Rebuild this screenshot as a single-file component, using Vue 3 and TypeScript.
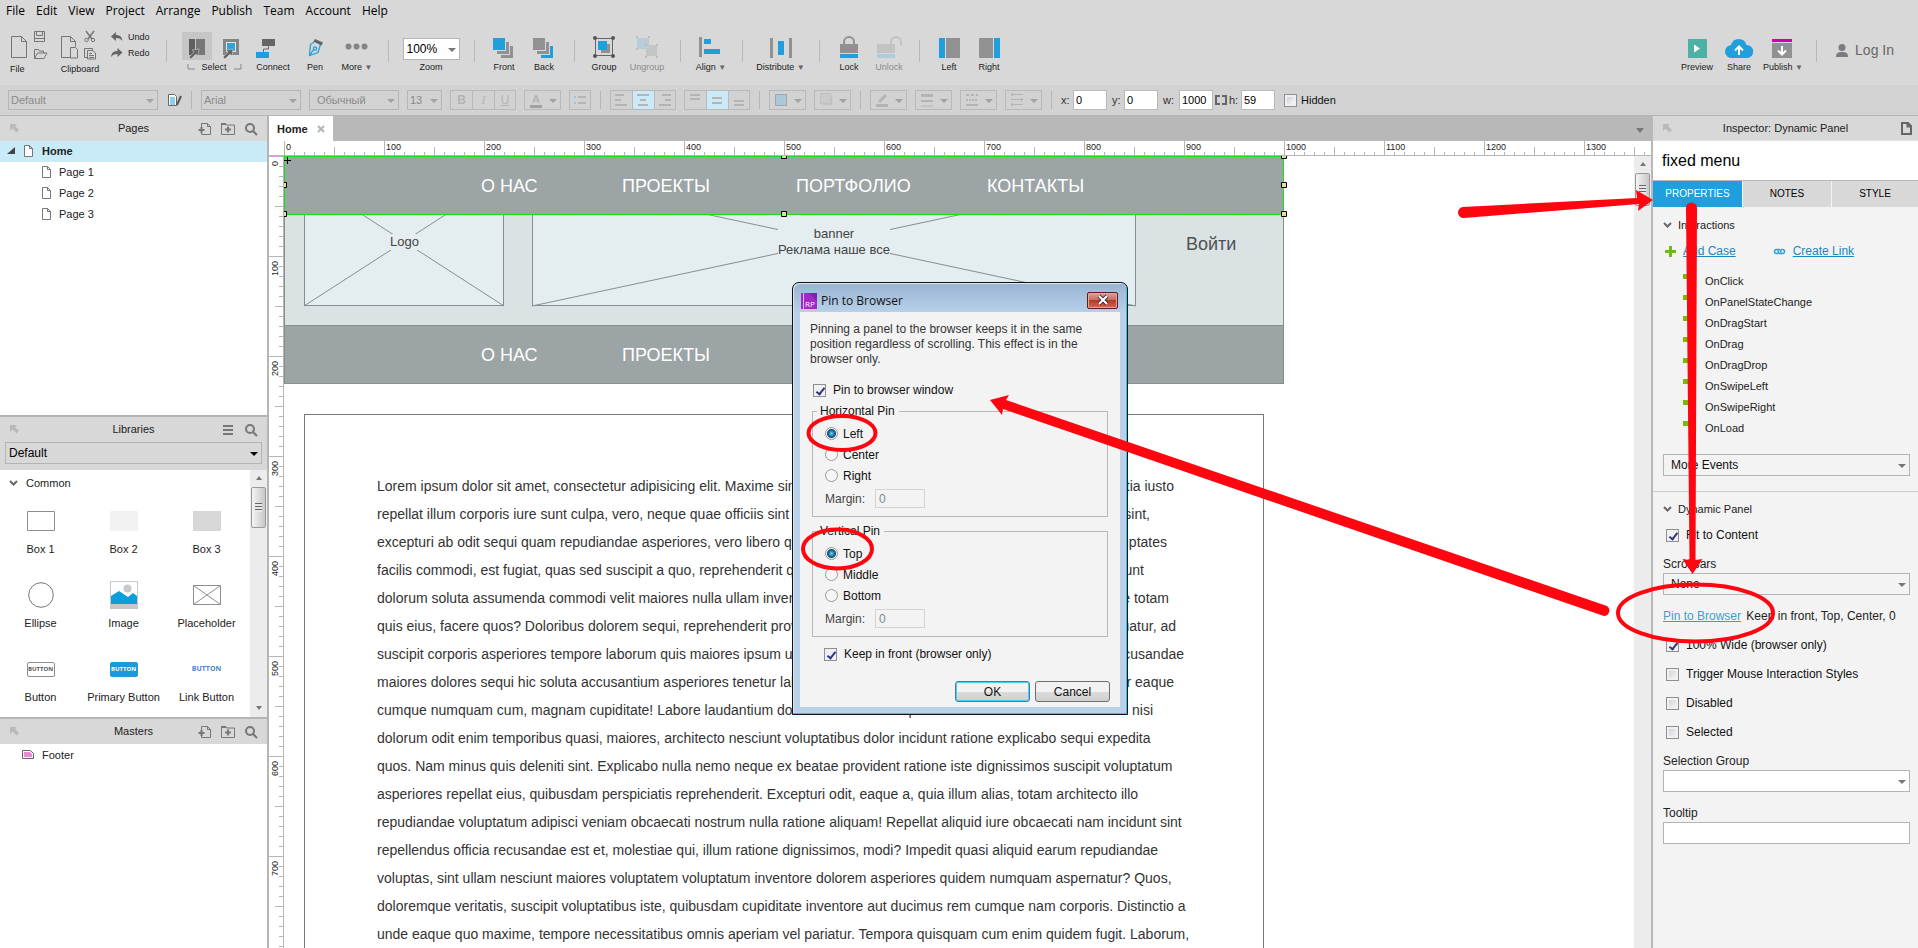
<script setup lang="ts">
import { ref } from 'vue'

interface CopyLine {
  lead: string
  tail?: string
  width?: number
}

const menus: string[] = ['File', 'Edit', 'View', 'Project', 'Arrange', 'Publish', 'Team', 'Account', 'Help']
const pages: string[] = ['Page 1', 'Page 2', 'Page 3']
const hMarks: number[] = Array.from({ length: 14 }, (_, i) => i * 100)
const vMarks: number[] = Array.from({ length: 8 }, (_, i) => i * 100)
const events: string[] = [
  'OnClick', 'OnPanelStateChange', 'OnDragStart', 'OnDrag', 'OnDragDrop', 'OnSwipeLeft', 'OnSwipeRight', 'OnLoad',
]
const navItems: string[] = ['О НАС', 'ПРОЕКТЫ', 'ПОРТФОЛИО', 'КОНТАКТЫ']

const copy: CopyLine[] = [
  { lead: 'Lorem ipsum dolor sit amet, consectetur adipisicing elit. Maxime sint quod', tail: 'mollitia iusto', width: 797 },
  { lead: 'repellat illum corporis iure sunt culpa, vero, neque quae officiis sint', tail: 'sint,', width: 773 },
  { lead: 'excepturi ab odit sequi quam repudiandae asperiores, vero libero quo', tail: 'voluptates', width: 790 },
  { lead: 'facilis commodi, est fugiat, quas sed suscipit a quo, reprehenderit quia', tail: 'incidunt', width: 767 },
  { lead: 'dolorum soluta assumenda commodi velit maiores nulla ullam invento', tail: 'quae totam', width: 792 },
  { lead: 'quis eius, facere quos? Doloribus dolorem sequi, reprehenderit prov', tail: 'consequatur, ad', width: 799 },
  { lead: 'suscipit corporis asperiores tempore laborum quis maiores ipsum unde', tail: 'recusandae', width: 807 },
  { lead: 'maiores dolores sequi hic soluta accusantium asperiores tenetur labore', tail: 'tenetur eaque', width: 797 },
  { lead: 'cumque numquam cum, magnam cupiditate! Labore laudantium dolor mollitia nam culpa', tail: 'nisi', width: 776 },
  { lead: 'dolorum odit enim temporibus quasi, maiores, architecto nesciunt voluptatibus dolor incidunt ratione explicabo sequi expedita' },
  { lead: 'quos. Nam minus quis deleniti sint. Explicabo nulla nemo neque ex beatae provident ratione iste dignissimos suscipit voluptatum' },
  { lead: 'asperiores repellat eius, quibusdam perspiciatis reprehenderit. Excepturi odit, eaque a, quia illum alias, totam architecto illo' },
  { lead: 'repudiandae voluptatum adipisci veniam obcaecati nostrum nulla ratione aliquam! Repellat aliquid iure obcaecati nam incidunt sint' },
  { lead: 'repellendus officia recusandae est et, molestiae qui, illum ratione dignissimos, modi? Impedit quasi aliquid earum repudiandae' },
  { lead: 'voluptas, sint ullam nesciunt maiores voluptatem voluptatum inventore dolorem asperiores quidem numquam aspernatur? Quos,' },
  { lead: 'doloremque veritatis, suscipit voluptatibus iste, quibusdam cupiditate inventore aut ducimus rem cumque nam corporis. Distinctio a' },
  { lead: 'unde eaque quo maxime, tempore necessitatibus omnis aperiam vel pariatur. Tempora quisquam cum enim quidem fugit. Laborum,' },
]

const pinned = ref(true)
const keepFront = ref(true)
const hPin = ref('Left')
const vPin = ref('Top')
const fit = ref(true)
const wide = ref(true)
const trigger = ref(false)
const disabled = ref(false)
const selected = ref(false)
const hidden = ref(false)
</script>

<template>
  <div class="app">
    <nav class="menubar">
      <button v-for="m in menus" :key="m">{{ m }}</button>
    </nav>

    <header class="toolbar">
      <div class="tool file-tool">
        <svg viewBox="8 33 44 28" width="44" height="28" fill="none" stroke="#757575">
          <path d="M11.5 36.5h10l5 5v16h-15zM21.5 36.5v5h5" />
          <path d="M34.5 31.5h10v10h-10zM36.5 31.5v4h6v-4M34.5 38.500h10" />
          <path d="M34.500 58.500v-9h4l1 1.500h4v2M34.500 58.500l3-5.500h9.500l-3 5.500z" />
        </svg>
        <button class="wide-label">File</button>
      </div>
      <div class="tool clip-tool">
        <svg viewBox="58 33 44 28" width="44" height="28" fill="none" stroke="#757575">
          <path d="M70 57.500h-8.500v-21h9l5 5v5M70.500 36.500v5h5" />
          <path d="M70.500 47.500h5l2 2v8.500h-7z" fill="#d8d8d8" />
          <path d="M86 31l6 8M94 31l-6 8" stroke-width="1.500" />
          <circle cx="86.500" cy="40" r="1.700" /><circle cx="93" cy="40" r="1.700" />
          <path d="M87 57.500h-2.500v-9h8v2M87.500 50.500h5l3 2.500v6h-8zM89 53.500h3M89 55.500h5M89 57.500h5" />
        </svg>
        <button class="wide-label">Clipboard</button>
      </div>
      <div class="history">
        <button><svg width="12" height="10" viewBox="0 0 12 10"><path d="M0 4.500L5 0v3c4 0 6 2 6.500 6C10 7 8 6 5 6v3z" fill="#666" /></svg>Undo</button>
        <button><svg width="12" height="10" viewBox="0 0 12 10"><path d="M11.500 4.500L6.500 0v3C2.500 3 .5 5 0 9c1.500-2 3.500-3 6.500-3v3z" fill="#666" /></svg>Redo</button>
      </div>
      <i class="sep"></i>
      <div class="tool select-tool">
        <svg viewBox="176 33 74 28" width="74" height="28">
          <path d="M181 32h30v28h-30z" fill="#c6c6c6" />
          <path d="M188 39h6v16h-6z" fill="#5f5f5f" /><path d="M195 39h9v16h-9z" fill="#777" />
          <path d="M223.500 40.500h13v13h-13z" fill="#e5e5e5" stroke="#858585" stroke-width="3" />
          <path d="M226 43h8v8h-8z" fill="#2fa4dc" />
          <g stroke="#ddd" stroke-width=".5" fill="#666"><path d="M188 57l5-5-2-2 7-1-1 7-2-2-5 5z" /><path d="M222 57l5-5-2-2 7-1-1 7-2-2-5 5z" /></g>
          <path d="M187 64v5h7M240 64v5h-7" fill="none" stroke="#888" />
        </svg>
        <button>Select</button>
      </div>
      <div class="tool">
        <svg viewBox="252 33 42 28" width="42" height="28">
          <path d="M262 39h13v7h-13z" fill="#666" /><path d="M256 52h13v6h-13z" fill="#1c9fdc" />
          <path d="M268.500 46v3h-5v3" fill="none" stroke="#666" />
        </svg>
        <button>Connect</button>
      </div>
      <div class="tool">
        <svg viewBox="295 33 42 28" width="42" height="28" fill="none" stroke="#2a9fda" stroke-width="1.300">
          <path d="M310.500 55.500l1-11 5-3.500 5 3.500-2.500 8zM311 55l4-6" /><circle cx="316" cy="48.500" r="1.600" />
          <path d="M316 39l8 3.500-1.500 3-8-4z" fill="#666" stroke="none" />
        </svg>
        <button>Pen</button>
      </div>
      <div class="tool">
        <svg viewBox="336 33 42 28" width="42" height="28" fill="#858585">
          <circle cx="348.500" cy="46.500" r="3" /><circle cx="356.500" cy="46.500" r="3" /><circle cx="364.500" cy="46.500" r="3" />
        </svg>
        <button>More <b>▼</b></button>
      </div>
      <i class="sep"></i>
      <div class="tool zoom-tool">
        <span class="pick"><select id="zoom"><option>100%</option></select></span>
        <label for="zoom">Zoom</label>
      </div>
      <i class="sep"></i>
      <div class="tool t40">
        <svg viewBox="485 33 40 28" width="40" height="28">
          <path d="M494 38h12v12h-12z" fill="#1f9fdc" />
          <path d="M507 42h3v12h-12v-3h9zM511 46h3v12h-12v-3h9z" fill="#919191" />
        </svg>
        <button>Front</button>
      </div>
      <div class="tool t40">
        <svg viewBox="525 33 40 28" width="40" height="28">
          <path d="M534 38h12v12h-12zM547 42h3v12h-12v-3h9z" fill="#919191" /><path d="M551 46h3v12h-12v-3h9z" fill="#1f9fdc" />
        </svg>
        <button>Back</button>
      </div>
      <i class="sep"></i>
      <div class="tool t40">
        <svg viewBox="585 33 40 28" width="40" height="28">
          <path d="M602 44h9v9h-9z" fill="#919191" /><path d="M599 41h9v9h-9z" fill="#1f9fdc" />
          <path d="M596.500 38.500h17v17h-17z" fill="none" stroke="#666" />
          <g fill="#555"><circle cx="596" cy="38" r="2" /><circle cx="614" cy="38" r="2" /><circle cx="596" cy="56" r="2" /><circle cx="614" cy="56" r="2" /></g>
        </svg>
        <button>Group</button>
      </div>
      <div class="tool t46 off">
        <svg viewBox="625 33 46 28" width="46" height="28">
          <path d="M647 45h11v11h-11z" fill="#c4c4c4" /><path d="M638 38h12v11h-12z" fill="#b9cdd8" />
          <g fill="#bcbcbc"><path d="M637 36h2v2h-2zM649 36h2v2h-2zM637 48h2v2h-2zM646 44h2v2h-2zM657 44h2v2h-2zM646 56h2v2h-2zM657 56h2v2h-2z" /></g>
        </svg>
        <button disabled>Ungroup</button>
      </div>
      <i class="sep"></i>
      <div class="tool">
        <svg viewBox="691 33 42 28" width="42" height="28">
          <path d="M700 37h3v20h-3z" fill="#919191" /><path d="M705 39h7v5h-7zM705 49h16v5h-16z" fill="#1f9fdc" />
        </svg>
        <button>Align <b>▼</b></button>
      </div>
      <i class="sep"></i>
      <div class="tool t56">
        <svg viewBox="753 33 56 28" width="56" height="28">
          <path d="M770 38h3v20h-3zM789 38h3v20h-3z" fill="#919191" /><path d="M778 41h6v14h-6z" fill="#1f9fdc" />
        </svg>
        <button>Distribute <b>▼</b></button>
      </div>
      <i class="sep"></i>
      <div class="tool t40">
        <svg viewBox="830 33 40 28" width="40" height="28">
          <path d="M845 45v-3a5 5 0 0 1 10 0v3" fill="none" stroke="#919191" stroke-width="2" />
          <path d="M841 44h18v9h-18z" fill="#919191" /><path d="M841 54h18v4h-18z" fill="#1f9fdc" />
        </svg>
        <button>Lock</button>
      </div>
      <div class="tool t40 off">
        <svg viewBox="870 33 40 28" width="40" height="28">
          <path d="M892 45v-3a5 5 0 0 1 10 0v3" fill="none" stroke="#c3c3c3" stroke-width="2" />
          <path d="M878 44h18v9h-18z" fill="#c3c3c3" /><path d="M878 54h18v4h-18z" fill="#b0cbd9" />
        </svg>
        <button disabled>Unlock</button>
      </div>
      <i class="sep"></i>
      <div class="tool t40">
        <svg viewBox="930 33 40 28" width="40" height="28">
          <path d="M940 38h6v20h-6z" fill="#1f9fdc" /><path d="M947 38h14v20h-14z" fill="#919191" />
        </svg>
        <button>Left</button>
      </div>
      <div class="tool t40">
        <svg viewBox="970 33 40 28" width="40" height="28">
          <path d="M980 38h14v20h-14z" fill="#919191" /><path d="M995 38h6v20h-6z" fill="#1f9fdc" />
        </svg>
        <button>Right</button>
      </div>
      <div class="account">
        <div class="tool">
          <svg viewBox="1677 33 42 28" width="42" height="28">
            <path d="M1689 39h19v19h-19z" fill="#4db1a6" /><path d="M1695 44.500l6 4-6 4z" fill="#fff" />
          </svg>
          <button>Preview</button>
        </div>
        <div class="tool">
          <svg viewBox="1719 33 42 28" width="42" height="28">
            <path d="M1733 58a6.500 6.500 0 0 1-1-13 8 8 0 0 1 15.500 0A6.500 6.500 0 0 1 1748 58z" fill="#1f9fdc" />
            <path d="M1740 55v-8M1736 50.500l4-4 4 4" fill="none" stroke="#fff" stroke-width="2" />
          </svg>
          <button>Share</button>
        </div>
        <div class="tool t46">
          <svg viewBox="1761 33 46 28" width="46" height="28">
            <path d="M1773 39h20v3h-20z" fill="#cc00b8" /><path d="M1773 43h20v15h-20z" fill="#919191" />
            <path d="M1783 46v8M1779 50.500l4 4 4-4" fill="none" stroke="#fff" stroke-width="2" />
          </svg>
          <button>Publish <b>▼</b></button>
        </div>
        <i class="sep"></i>
        <button class="login">
          <svg width="12" height="13" viewBox="0 0 12 13" fill="#7b7b7b"><circle cx="6" cy="3.500" r="3.500" /><path d="M0 13c0-4 2-5 6-5s6 1 6 5z" /></svg>
          Log In
        </button>
      </div>
    </header>

    <div class="stylebar">
      <span class="pick dim w150"><select aria-label="Widget style"><option>Default</option></select></span>
      <button class="bare" aria-label="Manage styles">
        <svg width="16" height="14" viewBox="0 0 16 14"><path d="M2.500 1.500h6l2 2v9h-8z" fill="#fff" stroke="#666" /><path d="M4 5h5M4 7h5M4 9h5M4 11h5" stroke="#1f9fdc" /><path d="M15 3l-4 9" stroke="#555" stroke-width="2" /></svg>
      </button>
      <i class="rule"></i>
      <span class="pick dim w100"><select aria-label="Font"><option>Arial</option></select></span>
      <span class="pick dim w90"><select aria-label="Weight"><option>Обычный</option></select></span>
      <span class="pick dim w35"><select aria-label="Size"><option>13</option></select></span>
      <span class="seg"><button><b>B</b></button><button><i>I</i></button><button><u>U</u></button></span>
      <button class="drop" aria-label="Text colour"><b class="ink">A</b></button>
      <button class="box" aria-label="Bullets"><svg width="20" height="18" viewBox="0 0 20 18"><path d="M4 6h2M4 12h2" stroke="#9cc4d6" stroke-width="2" /><path d="M8 6h8M8 12h8" stroke="#b4b4b4" stroke-width="2" /></svg></button>
      <i class="rule"></i>
      <span class="seg">
        <button aria-label="Align left"><svg width="20" height="18" viewBox="0 0 20 18"><path d="M4 4h9M4 9h6M4 14h12" /></svg></button>
        <button class="on" aria-label="Align centre"><svg width="20" height="18" viewBox="0 0 20 18"><path d="M4 4h12M7 9h6M5 14h10" /></svg></button>
        <button aria-label="Align right"><svg width="20" height="18" viewBox="0 0 20 18"><path d="M7 4h9M10 9h6M4 14h12" /></svg></button>
      </span>
      <span class="seg">
        <button aria-label="Align top"><svg width="20" height="18" viewBox="0 0 20 18"><path d="M5 4h10M5 8h10" /></svg></button>
        <button class="on" aria-label="Align middle"><svg width="20" height="18" viewBox="0 0 20 18"><path d="M5 7h10M5 12h10" /></svg></button>
        <button aria-label="Align bottom"><svg width="20" height="18" viewBox="0 0 20 18"><path d="M5 10h10M5 14h10" /></svg></button>
      </span>
      <i class="rule"></i>
      <button class="drop" aria-label="Fill"><svg width="20" height="18" viewBox="0 0 20 18"><path d="M5.500 3.500h11v11h-11z" fill="#a9c9d8" stroke="#a5a5a5" stroke-width="1" /></svg></button>
      <button class="drop" aria-label="Shadow"><svg width="20" height="18" viewBox="0 0 20 18"><path d="M8 5h9v9H8z" fill="#bcbcbc" stroke="#c8c8c8" stroke-width="1" /><path d="M5.500 2.500h10v10h-10z" fill="#cbcbcb" stroke="#c0c0c0" stroke-width="1" /></svg></button>
      <i class="rule"></i>
      <button class="drop" aria-label="Line colour"><svg width="20" height="18" viewBox="0 0 20 18"><path d="M5 14.500h12" stroke-width="3" /><path d="M8 11l7-7" stroke-width="3" /></svg></button>
      <button class="drop" aria-label="Line width"><svg width="20" height="18" viewBox="0 0 20 18"><path d="M5 4.500h12" stroke-width="3" /><path d="M5 10h12" /><path d="M5 15h12" stroke-width="1" /></svg></button>
      <button class="drop" aria-label="Line style"><svg width="20" height="18" viewBox="0 0 20 18"><path d="M5 4h12" stroke-dasharray="3 2" /><path d="M5 9h12" stroke-dasharray="2 1" /><path d="M5 14h12" /></svg></button>
      <button class="drop" aria-label="Arrow style"><svg width="20" height="18" viewBox="0 0 20 18"><path d="M5 3.500h12M5 8.500h12M5 13.500h12M7 2L5 3.500 7 5M15 7l2 1.500-2 1.500M7 12l-2 1.500L7 15" stroke-width="1" /></svg></button>
      <i class="rule"></i>
      <div class="coords">
        <label>x: <input value="0" /></label>
        <label>y: <input value="0" /></label>
        <label class="w">w: <input value="1000" /></label>
        <svg width="12" height="10" viewBox="0 0 12 10"><path d="M5 1H1v8h4M7 1h4v8H7" fill="none" stroke="#666" stroke-width="2" /></svg>
        <label>h: <input value="59" /></label>
        <label class="hide"><input v-model="hidden" type="checkbox" />Hidden</label>
      </div>
    </div>

    <div class="body">
      <aside class="left">
        <header class="head">
          <svg class="dock" width="9" height="9" viewBox="0 0 9 9"><path d="M0 0h7L5 2l4 4-2.500 2.500-4-4L0 7z" /></svg>
          <h2>Pages</h2>
          <button aria-label="Add page"><svg width="14" height="14" viewBox="0 0 14 14"><path d="M3.500 5V1.500h6l3 3v8h-9v-1.500M9.500 1.500v3h3" fill="none" stroke="#777" /><path d="M.5 8h6M3.500 5v6" stroke="#777" stroke-width="2" /></svg></button>
          <button aria-label="Add folder"><svg width="14" height="14" viewBox="0 0 14 14"><path d="M.5 12.500v-11h4l1 1.500h8v9.500z" fill="none" stroke="#777" /><path d="M0 1h5v2H0z" fill="#777" /><path d="M4 7.500h6M7 4.500v6" stroke="#777" stroke-width="2" /></svg></button>
          <button aria-label="Search pages"><svg width="14" height="14" viewBox="0 0 14 14"><circle cx="6" cy="6" r="4" fill="none" stroke="#777" stroke-width="2" /><path d="M9 9l4 4" stroke="#777" stroke-width="2" /></svg></button>
        </header>
        <ul class="tree">
          <li class="root"><svg class="twist" width="8" height="7" viewBox="0 0 8 7"><path d="M8 0v7H0z" fill="#444" /></svg>
            <svg width="9" height="12" viewBox="0 0 9 12"><path d="M.5.5h5l3 3v8h-8zM5.500.5v3h3" fill="#fff" stroke="#777" /></svg>Home</li>
          <li v-for="p in pages" :key="p"><svg width="9" height="12" viewBox="0 0 9 12"><path d="M.5.5h5l3 3v8h-8zM5.500.5v3h3" fill="#fff" stroke="#777" /></svg>{{ p }}</li>
        </ul>

        <header class="head ruled">
          <svg class="dock" width="9" height="9" viewBox="0 0 9 9"><path d="M0 0h7L5 2l4 4-2.500 2.500-4-4L0 7z" /></svg>
          <h2>Libraries</h2>
          <button aria-label="Library menu"><svg width="14" height="14" viewBox="0 0 14 14"><path d="M2 3h10M2 7h10M2 11h10" stroke="#777" stroke-width="2" /></svg></button>
          <button aria-label="Search libraries"><svg width="14" height="14" viewBox="0 0 14 14"><circle cx="6" cy="6" r="4" fill="none" stroke="#777" stroke-width="2" /><path d="M9 9l4 4" stroke="#777" stroke-width="2" /></svg></button>
        </header>
        <div class="libpick"><span class="pick dark"><select aria-label="Library"><option>Default</option></select></span></div>
        <div class="library">
          <div class="shelf">
            <h3><svg width="9" height="6" viewBox="0 0 9 6"><path d="M1 1l3.500 3.500L8 1" /></svg>Common</h3>
            <div class="widgets">
              <figure><div><svg width="28" height="20"><path d="M.5.5h27v19H.5z" fill="#fff" stroke="#8e8e8e" /></svg></div><figcaption>Box 1</figcaption></figure>
              <figure><div><svg width="28" height="20"><path d="M0 0h28v20H0z" fill="#f2f2f2" /></svg></div><figcaption>Box 2</figcaption></figure>
              <figure><div><svg width="28" height="20"><path d="M0 0h28v20H0z" fill="#d7d7d7" /></svg></div><figcaption>Box 3</figcaption></figure>
              <figure><div><svg width="26" height="26"><circle cx="13" cy="13" r="12.300" fill="#fff" stroke="#777" /></svg></div><figcaption>Ellipse</figcaption></figure>
              <figure><div><svg width="28" height="28"><path d="M.5.5h27v27H.5z" fill="#fff" stroke="#c8c8c8" /><path d="M0 23h28v5H0z" fill="#c8c8c8" /><path d="M1 15l8-5 9 6 5-4 4 3v8H1z" fill="#0c9ddd" /><circle cx="17.500" cy="7.500" r="4" fill="#c8c8c8" /></svg></div><figcaption>Image</figcaption></figure>
              <figure><div><svg width="28" height="20"><path d="M.5.5h27v19H.5zl27 19M27.500.5l-27 19" fill="#fff" stroke="#8e8e8e" /></svg></div><figcaption>Placeholder</figcaption></figure>
              <figure><div><span class="chip plain">BUTTON</span></div><figcaption>Button</figcaption></figure>
              <figure><div><span class="chip solid">BUTTON</span></div><figcaption>Primary Button</figcaption></figure>
              <figure><div><span class="chip text">BUTTON</span></div><figcaption>Link Button</figcaption></figure>
            </div>
          </div>
          <div class="scroll"><i class="up"></i><i class="thumb short"></i><i class="down"></i></div>
        </div>

        <header class="head ruled">
          <svg class="dock" width="9" height="9" viewBox="0 0 9 9"><path d="M0 0h7L5 2l4 4-2.500 2.500-4-4L0 7z" /></svg>
          <h2>Masters</h2>
          <button aria-label="Add master"><svg width="14" height="14" viewBox="0 0 14 14"><path d="M3.500 5V1.500h6l3 3v8h-9v-1.500M9.500 1.500v3h3" fill="none" stroke="#777" /><path d="M.5 8h6M3.500 5v6" stroke="#777" stroke-width="2" /></svg></button>
          <button aria-label="Add master folder"><svg width="14" height="14" viewBox="0 0 14 14"><path d="M.5 12.500v-11h4l1 1.500h8v9.500z" fill="none" stroke="#777" /><path d="M0 1h5v2H0z" fill="#777" /><path d="M4 7.500h6M7 4.500v6" stroke="#777" stroke-width="2" /></svg></button>
          <button aria-label="Search masters"><svg width="14" height="14" viewBox="0 0 14 14"><circle cx="6" cy="6" r="4" fill="none" stroke="#777" stroke-width="2" /><path d="M9 9l4 4" stroke="#777" stroke-width="2" /></svg></button>
        </header>
        <div class="master"><svg width="12" height="9" viewBox="0 0 12 9"><path d="M.5.5h8l3 3v5H.5z" fill="#fff" stroke="#666" /><path d="M2 2h6l2 2v3H2z" fill="#e88ad4" /></svg>Footer</div>
      </aside>

      <main class="center">
        <div class="tabs">
          <button class="tab">Home <svg width="8" height="8" viewBox="0 0 8 8"><path d="M1 1l6 6M7 1L1 7" stroke="#b5b5b5" stroke-width="2" /></svg></button>
          <i class="tabmenu"></i>
        </div>
        <div class="hruler"><div class="marks"><span v-for="m in hMarks" :key="m">{{ m }}</span></div></div>
        <div class="work">
          <div class="vruler"><span v-for="m in vMarks" :key="m">{{ m }}</span></div>
          <div class="canvas">
            <div class="banner-area">
              <svg width="200" height="129" class="ph logo"><path d="M.5.5h199v128H.5z" fill="#e4edef" stroke="#868e90" /><path d="M0 0l200 129M200 0L0 129" stroke="#868e90" /></svg>
              <span class="cap logo-cap">Logo</span>
              <svg width="604" height="129" class="ph ad"><path d="M.5.5h603v128H.5z" fill="#e4edef" stroke="#868e90" /><path d="M0 0l604 129M604 0L0 129" stroke="#868e90" /></svg>
              <span class="cap ad-cap">banner<br />Реклама наше все</span>
              <a href="#" class="enter">Войти</a>
            </div>
            <div class="bar static"><a v-for="n in navItems" :key="n" href="#">{{ n }}</a></div>
            <div class="bar fixed"><a v-for="n in navItems" :key="n" href="#">{{ n }}</a></div>
            <svg class="handles" width="1006" height="66" viewBox="-1 0 1006 66">
              <path d="M0 .5h1000M0 58.500h1000M.5 0v58M999.500 0v58" fill="none" stroke="#00f000" stroke-dasharray="5 1" />
              <g fill="#e8dca0" stroke="#000">
                <path d="M-2.500 26.500h5v5h-5zM-2.500 55.500h5v5h-5zM497.500-2.500h5v5h-5zM497.500 55.500h5v5h-5zM997.500-2.500h5v5h-5zM997.500 26.500h5v5h-5zM997.500 55.500h5v5h-5z" />
                <path d="M0 4.500h7M3.500 1v7" />
              </g>
            </svg>
            <div class="article">
              <p v-for="(l, i) in copy" :key="i" :style="l.width ? { width: l.width + 'px' } : {}"><span class="lead">{{ l.lead }}</span><span v-if="l.tail">{{ l.tail }}</span></p>
            </div>
          </div>
          <div class="scroll"><i class="up"></i><i class="thumb long"></i></div>
        </div>
      </main>

      <aside class="right">
        <header class="head">
          <svg class="dock" width="9" height="9" viewBox="0 0 9 9"><path d="M0 0h7L5 2l4 4-2.500 2.500-4-4L0 7z" /></svg>
          <h2>Inspector: Dynamic Panel</h2>
          <button aria-label="Page properties"><svg width="11" height="13" viewBox="0 0 11 13"><path d="M1 1h6l3 3v8H1zM6.500 1v3.500H10" fill="none" stroke="#666" stroke-width="2" /></svg></button>
        </header>
        <input class="name" value="fixed menu" aria-label="Widget name" />
        <div class="switch"><button class="on">PROPERTIES</button><button>NOTES</button><button>STYLE</button></div>
        <section>
          <h3><svg width="9" height="6" viewBox="0 0 9 6"><path d="M1 1l3.500 3.500L8 1" /></svg>Interactions</h3>
          <div class="links">
            <svg width="11" height="11" viewBox="0 0 11 11"><path d="M0 5.500h11M5.500 0v11" stroke="#6db829" stroke-width="3" /></svg><a href="#">Add Case</a>
            <svg class="chain" width="13" height="7" viewBox="0 0 13 7"><path d="M5 5.500H3.500a2 2 0 0 1 0-4H6a2 2 0 0 1 1.500 3M8 1.500h1.500a2 2 0 0 1 0 4H7a2 2 0 0 1-1.500-3" fill="none" stroke="#2a9fda" stroke-width="1.500" /></svg><a href="#">Create Link</a>
          </div>
          <ul class="events"><li v-for="e in events" :key="e"><i></i>{{ e }}</li></ul>
          <span class="pick more"><select aria-label="More events"><option>More Events</option></select></span>
        </section>
        <section class="panel">
          <h3><svg width="9" height="6" viewBox="0 0 9 6"><path d="M1 1l3.500 3.500L8 1" /></svg>Dynamic Panel</h3>
          <label class="check"><input v-model="fit" type="checkbox" />Fit to Content</label>
          <label for="sb" class="cap-line">Scrollbars</label>
          <span class="pick"><select id="sb"><option>None</option></select></span>
          <p class="pin"><a href="#">Pin to Browser</a> Keep in front, Top, Center, 0</p>
          <label class="check"><input v-model="wide" type="checkbox" />100% Wide (browser only)</label>
          <label class="check"><input v-model="trigger" type="checkbox" />Trigger Mouse Interaction Styles</label>
          <label class="check"><input v-model="disabled" type="checkbox" />Disabled</label>
          <label class="check"><input v-model="selected" type="checkbox" />Selected</label>
          <label for="sg" class="cap-line">Selection Group</label>
          <span class="pick white"><select id="sg"><option></option></select></span>
          <label for="tt" class="cap-line tt">Tooltip</label>
          <input id="tt" class="tip" />
        </section>
      </aside>
    </div>

    <div class="dialog" role="dialog" aria-labelledby="dlg">
      <div class="title">
        <svg width="16" height="16" viewBox="0 0 16 16"><path d="M0 0h16v16H0z" fill="#a02ac4" /><path d="M8 0h8v8z" fill="#8420a8" /><path d="M2.500 0v16" stroke="#e2b4f0" /><text x="4" y="14" font-size="8" fill="#fff" font-family="Open Sans, sans-serif">RP</text></svg>
        <h2 id="dlg">Pin to Browser</h2>
        <button class="close" aria-label="Close"><svg width="12" height="10" viewBox="0 0 12 10"><path d="M2 1l8 8M10 1L2 9" stroke="#4a3040" stroke-width="4" /><path d="M2 1l8 8M10 1L2 9" stroke="#fff" stroke-width="2" /></svg></button>
      </div>
      <div class="client">
        <p>Pinning a panel to the browser keeps it in the same<br />position regardless of scrolling. This effect is in the<br />browser only.</p>
        <label class="check"><input v-model="pinned" type="checkbox" />Pin to browser window</label>
        <fieldset>
          <legend>Horizontal Pin</legend>
          <label v-for="o in ['Left', 'Center', 'Right']" :key="o"><input v-model="hPin" type="radio" name="h" :value="o" />{{ o }}</label>
          <label class="margin">Margin: <input value="0" disabled /></label>
        </fieldset>
        <fieldset>
          <legend>Vertical Pin</legend>
          <label v-for="o in ['Top', 'Middle', 'Bottom']" :key="o"><input v-model="vPin" type="radio" name="v" :value="o" />{{ o }}</label>
          <label class="margin">Margin: <input value="0" disabled /></label>
        </fieldset>
        <label class="check front"><input v-model="keepFront" type="checkbox" />Keep in front (browser only)</label>
        <div class="actions"><button class="ok">OK</button><button>Cancel</button></div>
      </div>
    </div>

    <svg class="notes" width="1918" height="948" viewBox="0 0 1918 948">
      <g fill="#ff0510">
        <path d="M1463 207l174-9-1-8 17 10-15 11 1-7-175 14a5.500 5.500 0 0 1-1-11z" />
        <path d="M1686 208a5.500 5.500 0 0 1 11 0L1695.500 560l7-1-10 15-10-15 7 1z" />
        <path d="M1607 606L1006 400l3-5-19 5 12 15 1-6 601 207a5.500 5.500 0 0 0 3-10z" />
      </g>
      <g fill="none" stroke="#ff0510" stroke-width="4">
        <ellipse cx="1695.500" cy="613" rx="77.500" ry="28.500" />
        <ellipse cx="842" cy="433" rx="33.500" ry="17" />
        <ellipse cx="837.500" cy="549" rx="34.500" ry="19.500" />
      </g>
    </svg>
  </div>
</template>

<style>
html, body { margin: 0; overflow: hidden; }
</style>

<style scoped>
* { box-sizing: border-box; }
.app { position: relative; height: 100vh; display: flex; flex-direction: column; overflow: hidden; background: #fff; color: #222; font: 11px/14px "Liberation Sans", Arial, sans-serif; }
button, select, input { font: inherit; color: inherit; margin: 0; padding: 0; border: 0; background: none; border-radius: 0; }
svg { display: block; overflow: visible; flex: none; }
h2, h3, p, ul, figure { margin: 0; padding: 0; font-size: 11px; font-weight: 400; }
ul { list-style: none; }

.menubar { height: 22px; flex: none; display: flex; gap: 11px; padding-left: 6px; background: #d8d8d8; }
.menubar button { font: 12px/22px "Open Sans", "Noto Sans", sans-serif; color: #000; }

.toolbar { height: 63px; flex: none; display: flex; padding: 11px 24px 0 8px; background: #d8d8d8; font-size: 9px; line-height: 12px; color: #222; }
.tool { width: 42px; display: flex; flex-direction: column; align-items: center; white-space: nowrap; }
.tool button, .tool label { display: block; line-height: 12px; }
.tool b { font-size: 8px; line-height: 8px; color: #666; font-weight: 400; }
.file-tool { width: 44px; align-items: flex-start; }
.file-tool button { margin-left: 2px; }
.clip-tool { width: 44px; margin-left: 6px; }
.tool .wide-label { line-height: 16px; }
.history { width: 64px; padding-left: 9px; margin-top: -4px; }
.history button { display: flex; align-items: center; gap: 5px; height: 16px; white-space: nowrap; }
.history svg { width: 12px; }
.sep { width: 1px; height: 22px; margin: 7px 9px 0 10px; background: #b9b9b9; flex: none; }
.history + .sep { margin-left: 0; }
.select-tool { width: 76px; }
.t40 { width: 40px; }
.t46 { width: 46px; }
.t56 { width: 57px; }
.off { color: #8c8c8c; }
.zoom-tool { width: 66px; padding-top: 5px; }
.zoom-tool .pick { width: 57px; height: 22px; background: #fff; font-size: 12px; color: #000; margin-bottom: 1px; }
.account { display: flex; margin-left: auto; }
.login { display: flex; align-items: center; gap: 7px; height: 34px; margin-left: 10px; font-size: 14px; color: #666; white-space: nowrap; }

.pick { position: relative; display: block; height: 22px; border: 1px solid #b4b4b4; }
.pick select { width: 100%; height: 100%; padding: 0 0 0 3px; appearance: none; outline: none; display: block; }
.pick::after { content: ""; position: absolute; right: 3px; top: 50%; margin-top: -1px; border: 4px solid transparent; border-top-color: #777; border-bottom: 0; pointer-events: none; }

.stylebar { height: 31px; flex: none; display: flex; gap: 8px; padding: 5px 0 0 8px; background: #d2d2d2; border-bottom: 1px solid #b5b5b5; }
.stylebar > * { flex: none; }
.dim { height: 20px; color: #8a8a8a; border-color: #b6b6b6; }
.dim::after { border-top-color: #a2a2a2; }
.dim select { padding-left: 2px; }
.w150 { width: 150px; } .w100 { width: 100px; } .w90 { width: 90px; } .w35 { width: 35px; }
.w90 select { padding-left: 7px; }
.bare { width: 16px; height: 20px; }
.rule { width: 1px; height: 18px; margin: 1px 1px 0; background: #b6b6b6; }
.seg { display: flex; height: 20px; border: 1px solid #b9b9b9; color: #b4b4b4; font-size: 12px; }
.seg button { width: 22px; border-left: 1px solid #b9b9b9; }
.seg button:first-child { width: 21px; border-left: 0; }
.seg button:last-child { width: 21px; }
.seg .on { background: #cbe9f6; }
.seg svg, .drop svg { stroke: #b4b4b4; stroke-width: 2; fill: none; }
.seg i { font-family: "Liberation Serif", serif; }
.drop { position: relative; width: 37px; height: 20px; border: 1px solid #b9b9b9; text-align: left; }
.drop::after { content: ""; position: absolute; right: 3px; top: 8px; border: 4px solid transparent; border-top-color: #a2a2a2; border-bottom: 0; }
.ink { display: block; width: 12px; height: 15px; margin-left: 5px; border-bottom: 3px solid #a2a2a2; color: #b4b4b4; text-align: center; line-height: 13px; }
.box { width: 22px; height: 20px; border: 1px solid #b9b9b9; }
.coords { display: flex; align-items: center; height: 20px; margin-left: -8px; padding-left: 8px; color: #333; }
.coords label { display: flex; align-items: center; width: 46px; margin-right: 5px; white-space: nowrap; }
.coords label input:not([type]) { width: 34px; height: 20px; margin-left: auto; padding-left: 2px; background: #fff; border: 1px solid #b9b9b9; color: #000; }
.coords .w { width: 50px; margin-right: 2px; }
.coords svg { margin-right: 2px; }
.coords .hide { width: auto; margin: 0 0 0 4px; gap: 4px; color: #111; }

input[type="checkbox"] { appearance: none; width: 13px; height: 13px; flex: none; border: 1px solid #8e8f8f; background: linear-gradient(135deg, #cfd3da, #f4f4f4) content-box, #f0f0f0; padding: 2px; }
input[type="checkbox"]:checked { background: #eef0f4; position: relative; }
input[type="checkbox"]:checked::after { content: ""; position: absolute; left: 4px; top: 1px; width: 3px; height: 7px; border: solid #31347c; border-width: 0 2px 2px 0; transform: rotate(38deg); }

.body { flex: 1; min-height: 0; display: flex; }
.left { width: 269px; flex: none; display: flex; flex-direction: column; border-right: 2px solid #b5b5b5; background: #fff; }
.head { height: 25px; flex: none; display: flex; align-items: center; padding: 0 9px 0 10px; background: #d8d8d8; position: relative; }
.head h2 { position: absolute; inset: 0; line-height: 25px; text-align: center; pointer-events: none; }
.head button { margin-left: 9px; }
.head .dock { margin-right: auto; fill: #b9b9b9; }
.ruled { height: 27px; border-top: 2px solid #b5b5b5; }
.tree { flex: 1; }
.tree li { height: 21px; display: flex; align-items: center; gap: 8px; padding: 0 0 2px 42px; }
.tree .root { padding-left: 7px; background: #c9eaf7; font-weight: 700; gap: 9px; }
.libpick { padding: 0 5px 6px; background: #d8d8d8; flex: none; }
.libpick .pick { color: #000; font-size: 12px; }
.libpick .pick::after { border-top-color: #000; }
.library { flex: none; height: 247px; display: flex; }
.shelf { flex: 1; }
h3 { display: flex; align-items: center; gap: 6px; height: 14px; }
h3 svg { fill: none; stroke: #666; stroke-width: 2; }
.shelf h3 { height: 26px; padding-left: 9px; gap: 8px; }
.widgets { display: grid; grid-template-columns: 83px 83px 83px; grid-auto-rows: 74px; padding-top: 7px; margin-left: -1px; }
figure { display: flex; flex-direction: column; align-items: center; }
figure div { height: 36px; display: flex; align-items: center; }
figcaption { margin-top: 3px; white-space: nowrap; }
.chip { display: flex; align-items: center; justify-content: center; width: 28px; height: 15px; border-radius: 2px; font: 700 6px/14px "Open Sans", sans-serif; }
.plain { border: 1px solid #8e8e8e; color: #555; }
.solid { background: #1c9ad6; color: #fff; }
.text { color: #4a86c8; font-size: 7px; }
.scroll { width: 17px; flex: none; display: flex; flex-direction: column; align-items: center; background: #ececec; }
.up { margin: 6px 0 7px; border: 3px solid transparent; border-bottom: 4px solid #777; border-top: 0; }
.down { margin: auto 0 7px; border: 3px solid transparent; border-top: 4px solid #777; border-bottom: 0; }
.thumb { width: 15px; height: 41px; border: 1px solid #999; border-radius: 2px; background: repeating-linear-gradient(#666 0 1px, #e8e8e8 1px 3px) center / 7px 9px no-repeat, linear-gradient(90deg, #f4f4f4, #c8c8cc); }
.long { height: 33px; }
.master { display: flex; align-items: center; gap: 8px; height: 21px; margin-bottom: 183px; padding-left: 22px; }

.center { flex: 1; min-width: 0; display: flex; flex-direction: column; }
.tabs { height: 25px; flex: none; display: flex; justify-content: space-between; background: #b8b8b8; }
.tab { display: flex; align-items: center; gap: 9px; width: 64px; padding-left: 8px; background: #fff; font-weight: 700; }
.tabmenu { margin: 12px 7px 0 0; height: 0; border: 4px solid transparent; border-top: 5px solid #777; border-bottom: 0; }
.hruler { height: 15px; flex: none; padding-left: 15px; border-bottom: 1px solid #b5b5b5; overflow: hidden; font-size: 9px; }
.marks { display: flex; height: 14px; background-image: linear-gradient(90deg, #b5b5b5 1px, transparent 1px), linear-gradient(90deg, #b5b5b5 1px, transparent 1px), linear-gradient(90deg, #b5b5b5 1px, transparent 1px); background-size: 10px 3px, 50px 8px, 100px 14px; background-repeat: repeat-x; background-position: left bottom; }
.marks span { width: 100px; flex: none; padding-left: 2px; line-height: 12px; }
.work { flex: 1; min-height: 0; display: flex; }
.vruler { width: 15px; flex: none; overflow: hidden; border-right: 1px solid #b5b5b5; font-size: 9px; background-image: linear-gradient(#b5b5b5 1px, transparent 1px), linear-gradient(#b5b5b5 1px, transparent 1px), linear-gradient(#b5b5b5 1px, transparent 1px); background-size: 4px 10px, 8px 50px, 14px 100px; background-repeat: repeat-y; background-position: right top; }
.vruler span { display: block; width: 12px; height: 100px; writing-mode: vertical-rl; transform: rotate(180deg); line-height: 12px; text-align: right; padding-bottom: 5px; }
.canvas { position: relative; flex: 1; min-width: 0; overflow: hidden; }
.banner-area { position: absolute; left: 0; top: 0; width: 1000px; height: 170px; background: #dae2e4; border: 1px solid #868e90; }
.ph { position: absolute; top: 20px; }
.logo { left: 19px; }
.ad { left: 247px; }
.cap { position: absolute; background: #e4edef; font-size: 13px; line-height: 16px; color: #444; text-align: center; white-space: nowrap; }
.logo-cap { left: 105px; top: 77px; }
.ad-cap { left: 493px; top: 69px; }
.enter { position: absolute; left: 901px; top: 77px; font-size: 18px; line-height: 20px; color: #4d5254; text-decoration: none; }
.bar { position: absolute; left: 0; width: 1000px; height: 59px; display: grid; grid-template-columns: 141px 174px 191px 1fr; padding-left: 196px; background: #9ca4a6; border: 1px solid #868e90; font-size: 18px; line-height: 59px; }
.bar a { color: #fff; text-decoration: none; white-space: nowrap; }
.static { top: 169px; }
.fixed { top: 0; }
.handles { position: absolute; left: -1px; top: 0; }
.article { position: absolute; left: 20px; top: 258px; width: 960px; height: 800px; padding: 57px 0 0 72px; border: 1px solid #797979; font-size: 14px; line-height: 28px; color: #333; }
.article p { display: flex; height: 28px; font-size: 14px; white-space: nowrap; }
.lead { flex: 1; min-width: 0; overflow: hidden; }

.right { width: 267px; flex: none; border-left: 2px solid #b8b8b8; background: #f3f3f3; }
.right .head button { margin-right: -4px; }
.right .head { padding-right: 10px; border-bottom: 1px solid #e4e4e4; }
.name { display: block; width: 100%; height: 40px; padding-left: 9px; background: #fff; border-bottom: 1px solid #b8b8b8; font-size: 16px; color: #000; outline: none; }
.switch { display: grid; grid-template-columns: 89px 88px 1fr; gap: 1px; height: 26px; background: #f3f3f3; }
.switch button { background: #d8d8d8; font-size: 10px; color: #000; }
.switch .on { background: #1f9fdb; color: #fff; }
section { padding: 11px 8px 15px 10px; }
section a { color: #1a87bd; }
.links { display: flex; align-items: center; height: 14px; margin-top: 12px; padding-left: 2px; font-size: 12px; gap: 7px; }
.links .chain { margin: 0 0 0 30px; }
.events { margin-top: 14px; }
.events li { display: flex; height: 21px; padding-left: 20px; line-height: 18px; }
.events i { width: 8px; height: 5px; margin: 2px 14px 0 0; background: #76bc00; }
section .pick { font-size: 12px; color: #111; }
section .pick select { padding-left: 7px; }
.more { margin-top: 14px; }
.panel { border-top: 1px solid #ccc; padding-top: 10px; font-size: 12px; }
.check { display: flex; align-items: center; gap: 7px; height: 14px; font-size: 12px; color: #111; white-space: nowrap; }
.panel .check { margin: 0 0 15px 3px; }
.panel h3 + .check { margin-top: 12px; }
.cap-line { display: block; height: 14px; margin-bottom: 2px; }
.pin { font-size: 12px; margin: 14px 0 15px; white-space: nowrap; }
.pin a { color: #3f9fcb; margin-right: 2px; }
.white { background: #fff; }
.tt { margin-top: 14px; }
.tip { width: 100%; height: 22px; background: #fff; border: 1px solid #b4b4b4; }

.dialog { position: absolute; left: 792px; top: 282px; width: 336px; height: 433px; padding: 0 7px 7px; border: 1px solid #111; border-radius: 7px 7px 0 0; background: linear-gradient(#98b4d2, #b9d1ea 30px); box-shadow: inset -1px -1px #3bc3e6, inset 1px 1px #dbe8f5; font-size: 12px; color: #111; }
.title { height: 29px; display: flex; align-items: center; gap: 4px; padding: 6px 2px 0 1px; }
.title h2 { font: 12px/16px "Open Sans", "Noto Sans", sans-serif; }
.close { width: 31px; height: 17px; margin: -1px 0 0 auto; display: flex; align-items: center; justify-content: center; border: 1px solid #5a1c20; border-radius: 2px; background: linear-gradient(#e0a095, #c8705f 45%, #b03c26 50%, #cf6b52); box-shadow: inset 0 0 0 1px #e0a79c; }
.client { height: 395px; padding: 10px 10px 0; background: #f3f3f3; }
.client p { font-size: 12px; line-height: 15px; color: #333; white-space: nowrap; }
.client > .check { margin: 16px 0 7px 3px; }
fieldset { min-width: 0; height: 113px; margin: 0 2px 7px; padding: 5px 0 0 12px; border: 1px solid #b8b8b8; font-size: 12px; line-height: 14px; }
legend { padding: 0 4px 0 3px; margin-left: -8px; }
fieldset label { display: flex; align-items: center; gap: 5px; height: 21px; }
fieldset .margin { height: 25px; gap: 10px; color: #444; }
.margin input { width: 50px; height: 19px; padding-left: 3px; border: 1px solid #d4d4d4; color: #888; }
input[type="radio"] { appearance: none; width: 13px; height: 13px; border: 1px solid #999; border-radius: 50%; background: #f6f6f6; }
input[type="radio"]:checked { background: radial-gradient(circle at 50% 50%, #7ad0ee 0, #1a6f9c 3px, #0c4a70 4px, #f2f2f2 5px); }
.client > .front { margin: 10px 0 13px 14px; }
.actions { display: flex; justify-content: flex-end; gap: 5px; margin-top: 20px; }
.actions button { width: 75px; height: 21px; border: 1px solid #707070; border-radius: 3px; background: linear-gradient(#f2f2f2 50%, #dcdcdc 50%, #cfcfcf); }
.actions .ok { border-color: #3c7fb1; box-shadow: inset 0 0 0 1px #48d0f4; }
.notes { position: absolute; left: 0; top: 0; pointer-events: none; }
</style>
